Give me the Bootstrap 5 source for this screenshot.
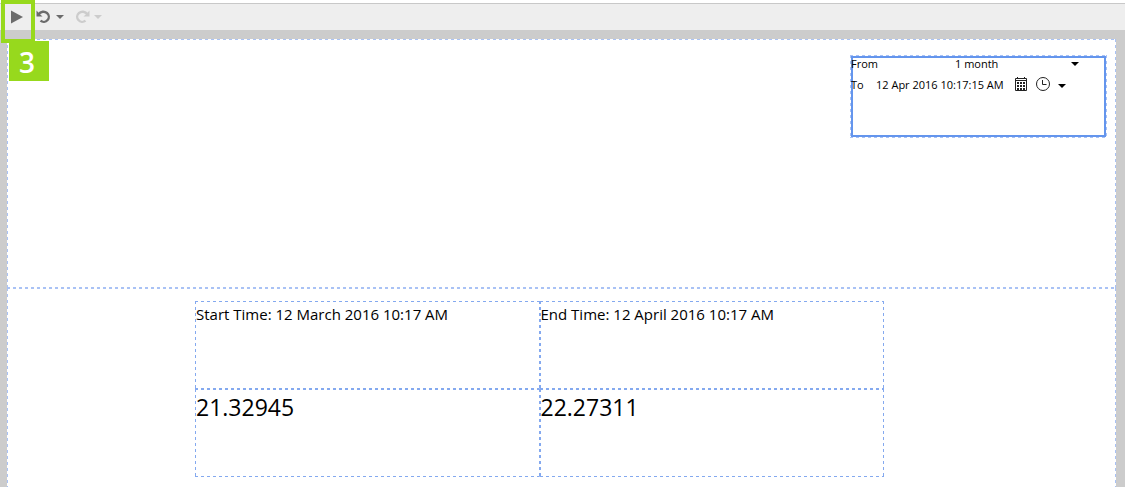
<!DOCTYPE html>
<html lang="en">
<head>
<meta charset="utf-8">
<meta name="viewport" content="width=device-width, initial-scale=1">
<title>Page designer</title>
<link href="https://cdn.jsdelivr.net/npm/bootstrap@5.3.0/dist/css/bootstrap.min.css" rel="stylesheet">
<style>
  body { font-family: "Open Sans", "Noto Sans", sans-serif; color: #000; background: #ccc; }
  svg { display: block; }
  .toolbar { height: 30px; background: #eee; border-top: 3px solid #fff; box-shadow: inset 0 1px #c8c8c8; padding-left: 11px; }
  .tool, .picker-btn { background: none; border: 0; padding: 0; color: #6b6b6b; }
  .tool:disabled { color: #ccc; }
  .workspace { padding: 9px 9px 0 7px; }
  /* One-pixel guide line of 3px dashes on every side */
  .guide {
    --line: #a9c2f5;
    --bottom: 1px;
    background:
      repeating-linear-gradient(90deg, var(--line) 0 3px, transparent 3px 6px) top / 100% 1px no-repeat,
      repeating-linear-gradient(90deg, var(--line) 0 3px, transparent 3px 6px) bottom / 100% var(--bottom) no-repeat,
      repeating-linear-gradient(180deg, var(--line) 0 3px, transparent 3px 6px) left / 1px 100% no-repeat,
      repeating-linear-gradient(180deg, var(--line) 0 3px, transparent 3px 6px) right / 1px 100% no-repeat,
      #fff;
  }
  .header-zone { min-height: 249px; padding: 16px 9px; }
  .detail-zone { --bottom: 0; padding: 13px 232px 10px 188px; }
  .time-widget { width: 257px; padding: 1px; font-size: 11px; line-height: 16px; }
  .time-frame { height: 81px; box-shadow: inset 0 0 0 2px #6495ed; }
  .time-row { height: 21px; padding-right: 27px; }
  .time-row label { width: 25px; }
  .time-row select, .time-row input { appearance: none; background: none; border: 0; padding: 0; outline: 0; font-size: 11px; line-height: 16px; height: 16px; color: #000; }
  .time-row select { width: 100px; }
  .time-row input { width: 131px; }
  .picker-btn { color: #222; }
  .readings { table-layout: fixed; border-collapse: separate; border-spacing: 0; font-size: 15px; line-height: 24px; }
  .readings th, .readings td { --line: #84a9ef; --bottom: 1px; height: 88px; padding: 1px; font-weight: 400; vertical-align: top; white-space: nowrap; }
  .readings td { font-size: 23px; line-height: 34px; }
  .callout-frame { left: 1px; top: 0; width: 34px; height: 43px; border: 4px solid #97d91d; pointer-events: none; z-index: 2; }
  .callout-number { left: 9px; top: 41px; width: 40px; height: 40px; background: #97d91d; font-size: 28px; font-weight: 600; line-height: 42px; z-index: 3; padding-right: 4px; }
</style>
</head>
<body class="d-flex flex-column min-vh-100 position-relative">
  <header class="toolbar d-flex align-items-center flex-shrink-0">
    <button class="tool" type="button" aria-label="Preview">
      <svg width="13" height="14" viewBox="0 0 13 14"><path d="M0 0.5 12 7 0 13.5z" fill="currentColor"/></svg>
    </button>
    <button class="tool d-flex align-items-center gap-1 ms-2 ps-1" type="button" aria-label="Undo">
      <svg width="16" height="14" viewBox="0 0 16 14"><path d="M2.500 4.300C4.800 1.300 8.500.9 11 3A5 5 0 1 1 4.500 10.700" fill="none" stroke="currentColor" stroke-width="2.4"/><path d="M.5 .5v6h6L4.300 4.600z" fill="currentColor"/></svg>
      <svg width="8" height="4" viewBox="0 0 8 4"><path d="M0 0h8L4 4z" fill="currentColor"/></svg>
    </button>
    <button class="tool d-flex align-items-center gap-1 ms-2 ps-1" type="button" aria-label="Redo" disabled>
      <svg width="14" height="14" viewBox="0 0 14 14"><path d="M11.500 4.300C9.200 1.300 5.500.9 3 3A5 5 0 1 0 9.500 10.700" fill="none" stroke="currentColor" stroke-width="2.4"/><path d="M13.500 .5v6h-6l2.200-1.900z" fill="currentColor"/></svg>
      <svg width="8" height="4" viewBox="0 0 8 4"><path d="M0 0h8L4 4z" fill="currentColor"/></svg>
    </button>
  </header>

  <main class="workspace d-flex flex-column flex-grow-1">
    <section class="guide header-zone d-flex justify-content-end align-items-start">
      <form class="guide time-widget">
        <div class="time-frame">
          <div class="time-row d-flex align-items-start justify-content-between">
            <label for="from">From</label>
            <div class="d-flex align-items-center">
              <select id="from"><option>1 month</option></select>
              <svg class="ms-3" width="8" height="4" viewBox="0 0 8 4"><path d="M0 0h8L4 4z"/></svg>
            </div>
          </div>
          <div class="time-row d-flex align-items-start">
            <label for="to">To</label>
            <input id="to" type="text" value="12 Apr 2016 10:17:15 AM">
            <div class="d-flex align-items-center ps-2 gap-2">
              <button class="picker-btn" type="button" aria-label="Pick date">
                <svg width="13" height="14" viewBox="0 0 13 14" fill="none" stroke="currentColor"><path d="M.5 1.500h11v12H.5zM.5 3.500h11M2.500 0v2M9.500 0v2"/><path d="M2 6h2M5 6h2M8 6h2M2 9h2M5 9h2M8 9h2M2 12h2M5 12h2M8 12h2" stroke-width="2"/></svg>
              </button>
              <button class="picker-btn" type="button" aria-label="Pick time">
                <svg width="14" height="14" viewBox="0 0 14 14" fill="none" stroke="currentColor"><circle cx="7" cy="7" r="6.500"/><path d="M6.500 3v4.500h4"/></svg>
              </button>
              <button class="picker-btn pt-1" type="button" aria-label="Time options">
                <svg width="8" height="4" viewBox="0 0 8 4"><path d="M0 0h8L4 4z" fill="#000"/></svg>
              </button>
            </div>
          </div>
        </div>
      </form>
    </section>

    <section class="guide detail-zone flex-grow-1">
      <table class="readings w-100">
        <thead>
          <tr>
            <th class="guide" scope="col">Start Time: 12 March 2016 10:17 AM</th>
            <th class="guide" scope="col">End Time: 12 April 2016 10:17 AM</th>
          </tr>
        </thead>
        <tbody>
          <tr>
            <td class="guide">21.32945</td>
            <td class="guide">22.27311</td>
          </tr>
        </tbody>
      </table>
    </section>
  </main>

  <div class="callout-frame position-absolute"></div>
  <div class="callout-number position-absolute text-white text-center">3</div>
<script src="https://cdn.jsdelivr.net/npm/bootstrap@5.3.0/dist/js/bootstrap.bundle.min.js"></script>
</body>
</html>
